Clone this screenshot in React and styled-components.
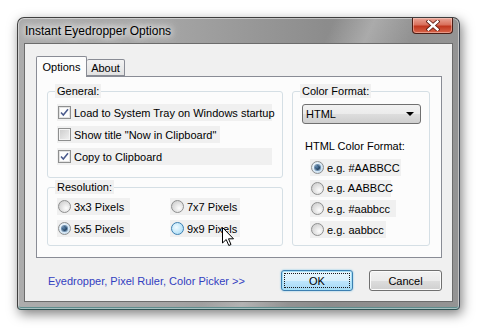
import React from "react";
import styled, { createGlobalStyle } from "styled-components";

const Global = createGlobalStyle`
  html, body {
    margin: 0;
    background: #fff;
  }
  body {
    font-family: "Liberation Sans", Arial, sans-serif;
    font-size: 11px;
    color: #000;
  }
`;

function Checkbox({ checked }) {
  return (
    <Box checked={checked}>
      {checked && (
        <svg width="11" height="11" viewBox="0 0 11 11">
          <path d="M2 5.5 L4.3 8 L9 2.2" fill="none" stroke="#4a5a8c" strokeWidth="1.5" />
        </svg>
      )}
    </Box>
  );
}

function CloseGlyph() {
  return (
    <svg width="14" height="11" viewBox="0 0 14 11">
      <path d="M2.5 1.5 L11.5 9.5 M11.5 1.5 L2.5 9.5" stroke="#5a1a10" strokeWidth="4" strokeLinecap="square" />
      <path d="M2.5 1.5 L11.5 9.5 M11.5 1.5 L2.5 9.5" stroke="#fff" strokeWidth="2.4" strokeLinecap="square" />
    </svg>
  );
}

function Cursor() {
  return (
    <Pointer width="13" height="20" viewBox="0 0 13 20">
      <path d="M0.5 0.5 L0.5 16 L4.2 12.5 L6.8 18.5 L9 17.5 L6.5 11.8 L11.5 11.8 Z" fill="#fff" stroke="#000" strokeWidth="1" />
    </Pointer>
  );
}

export default function App() {
  return (
    <>
      <Global />
      <Page>
        <Window>
          <TitleBar>
            <Title>Instant Eyedropper Options</Title>
            <CloseButton>
              <CloseGlyph />
            </CloseButton>
          </TitleBar>
          <Client>
            <TabRow>
              <Tab selected width={51}>Options</Tab>
              <Tab width={38}>About</Tab>
            </TabRow>
            <Panel>
              <LeftColumn>
                <Group height={94}>
                  <Legend>General:</Legend>
                  <Stack gap={5}>
                    <Option width={215}>
                      <Checkbox checked />
                      <span>Load to System Tray on Windows startup</span>
                    </Option>
                    <Option width={163}>
                      <Checkbox />
                      <span>Show title "Now in Clipboard"</span>
                    </Option>
                    <Option width={215}>
                      <Checkbox checked />
                      <span>Copy to Clipboard</span>
                    </Option>
                  </Stack>
                </Group>
                <Group height={66}>
                  <Legend>Resolution:</Legend>
                  <ResolutionGrid>
                    <Option width={73}>
                      <Radio />
                      <span>3x3 Pixels</span>
                    </Option>
                    <Option width={70}>
                      <Radio />
                      <span>7x7 Pixels</span>
                    </Option>
                    <Option width={73}>
                      <Radio checked />
                      <span>5x5 Pixels</span>
                    </Option>
                    <Option width={70}>
                      <Radio hover />
                      <span>9x9 Pixels</span>
                      <Cursor />
                    </Option>
                  </ResolutionGrid>
                </Group>
              </LeftColumn>
              <Group height={162}>
                <Legend>Color Format:</Legend>
                <Select>
                  <span>HTML</span>
                  <Arrow />
                </Select>
                <SubLabel>HTML Color Format:</SubLabel>
                <Stack gap={3.7} indent={8}>
                  <Option width={91}>
                    <Radio checked />
                    <span>e.g. #AABBCC</span>
                  </Option>
                  <Option width={81}>
                    <Radio />
                    <span>e.g. AABBCC</span>
                  </Option>
                  <Option width={86}>
                    <Radio />
                    <span>e.g. #aabbcc</span>
                  </Option>
                  <Option width={76}>
                    <Radio />
                    <span>e.g. aabbcc</span>
                  </Option>
                </Stack>
              </Group>
            </Panel>
            <Footer>
              <Link>Eyedropper, Pixel Ruler, Color Picker &gt;&gt;</Link>
              <Buttons>
                <Button primary width={72}>
                  <Focus>OK</Focus>
                </Button>
                <Button width={73}>Cancel</Button>
              </Buttons>
            </Footer>
          </Client>
        </Window>
      </Page>
    </>
  );
}

const Page = styled.div`
  width: 480px;
  height: 330px;
  box-sizing: border-box;
  padding: 17px 0 0 17px;
  overflow: hidden;
`;

const Window = styled.div`
  width: 443px;
  height: 293px;
  box-sizing: border-box;
  display: flex;
  flex-direction: column;
  padding: 0 6px 7px 6px;
  border: 1px solid #3e3e3e;
  border-right-color: #3c4450;
  border-bottom-color: #2e5252;
  border-radius: 7px 7px 4px 4px;
  background:
    linear-gradient(115deg, transparent 55%, rgba(255, 255, 255, 0.25) 62%, transparent 70%),
    linear-gradient(to right, #acacac 0%, #a4a4a4 35%, #8c8c8c 70%, #949494 100%);
  box-shadow:
    inset 0 0 0 1px rgba(255, 255, 255, 0.45),
    inset 0 -2px 0 #5f8e8e,
    2px 4px 12px rgba(0, 0, 0, 0.5);
`;

const TitleBar = styled.div`
  height: 25px;
  display: flex;
  justify-content: space-between;
  align-items: flex-start;
`;

const Title = styled.div`
  font-family: "Liberation Sans", Arial, sans-serif;
  font-size: 12px;
  line-height: 27px;
  padding-left: 1px;
  color: #000;
  text-shadow: 0 0 6px #fff, 0 0 10px #fff, 0 0 14px #eee;
`;

const CloseButton = styled.div`
  width: 41px;
  height: 16px;
  box-sizing: border-box;
  border: 1px solid #4a1c14;
  border-top: none;
  border-radius: 0 0 4px 4px;
  background: linear-gradient(#e9a597 0%, #d9705c 45%, #c0371f 55%, #d8654a 100%);
  box-shadow: inset 0 0 0 1px rgba(255, 220, 210, 0.45);
  display: flex;
  align-items: center;
  justify-content: center;
`;

const Client = styled.div`
  flex: 1;
  display: flex;
  flex-direction: column;
  box-sizing: border-box;
  background: #f0f0f0;
  border: 1px solid #6c6c6c;
  padding: 12px 10px 0 11px;
`;

const TabRow = styled.div`
  display: flex;
  align-items: flex-end;
  height: 20px;
`;

const Tab = styled.div`
  width: ${(p) => p.width}px;
  height: ${(p) => (p.selected ? 21 : 17)}px;
  margin-bottom: ${(p) => (p.selected ? -1 : 0)}px;
  box-sizing: border-box;
  border: 1px solid #898c95;
  border-bottom: ${(p) => (p.selected ? "none" : "1px solid #898c95")};
  border-left: ${(p) => (p.selected ? "1px solid #898c95" : "none")};
  border-radius: 2px 2px 0 0;
  background: ${(p) => (p.selected ? "#fcfcfc" : "linear-gradient(#f3f3f3, #e2e2e2)")};
  position: relative;
  z-index: ${(p) => (p.selected ? 1 : 0)};
  display: flex;
  align-items: center;
  justify-content: center;
  padding-top: ${(p) => (p.selected ? 0 : 1)}px;
`;

const Panel = styled.div`
  height: 182px;
  box-sizing: border-box;
  border: 1px solid #898c95;
  background: #fcfcfc;
  padding: 7px 0 0 10px;
  display: grid;
  grid-template-columns: 236px 138px;
  column-gap: 9px;
  align-items: start;
`;

const LeftColumn = styled.div`
  display: flex;
  flex-direction: column;
  gap: 2px;
`;

const Group = styled.fieldset`
  margin: 0;
  height: ${(p) => p.height}px;
  box-sizing: border-box;
  border: 1px solid #d5dfe5;
  border-radius: 3px;
  padding: 0 8px 0 9px;
  min-width: 0;
`;

const Legend = styled.legend`
  padding: 0 2px;
  margin-left: -2px;
  line-height: 14px;
  background: #f0f0f0;
`;

const Stack = styled.div`
  display: flex;
  flex-direction: column;
  align-items: flex-start;
  gap: ${(p) => p.gap}px;
  padding-top: 6px;
  padding-left: ${(p) => p.indent || 0}px;
`;

const ResolutionGrid = styled.div`
  display: grid;
  grid-template-columns: 113px 70px;
  row-gap: 5px;
  padding-top: 4px;
`;

const Option = styled.div`
  position: relative;
  width: ${(p) => p.width}px;
  height: 17px;
  display: flex;
  align-items: center;
  gap: 3px;
  padding-left: 1px;
  box-sizing: border-box;
  background: #f0f0f0;
  white-space: nowrap;
`;

const Box = styled.span`
  width: 13px;
  height: 13px;
  box-sizing: border-box;
  flex-shrink: 0;
  border: 1px solid #8e8f8f;
  display: flex;
  align-items: center;
  justify-content: center;
  background: ${(p) =>
    p.checked ? "#fdfdfd" : "linear-gradient(135deg, #cbcbcb, #f2f2f2)"};
  box-shadow: ${(p) => (p.checked ? "inset 0 0 0 1px #e3e3e3" : "inset 0 0 0 1px #f4f4f4")};
`;

const Radio = styled.span`
  width: 13px;
  height: 13px;
  box-sizing: border-box;
  flex-shrink: 0;
  border-radius: 50%;
  border: 1px solid ${(p) => (p.hover ? "#3c7fb1" : "#8e8f8f")};
  display: flex;
  align-items: center;
  justify-content: center;
  background: ${(p) =>
    p.hover
      ? "radial-gradient(circle at 40% 40%, #f0faff, #b6e2f8 70%)"
      : p.checked
      ? "radial-gradient(circle at 40% 40%, #ffffff, #c9dff0 75%)"
      : "radial-gradient(circle at 65% 65%, #fdfdfd, #d0d0d0 80%)"};
  &::after {
    content: "";
    display: ${(p) => (p.checked ? "block" : "none")};
    width: 5px;
    height: 5px;
    border-radius: 50%;
    background: radial-gradient(circle at 35% 35%, #5e88b0, #12304e 80%);
    box-shadow: 0 0 0 1px #6c8fb0;
  }
`;

const Pointer = styled.svg`
  position: absolute;
  left: 52px;
  top: 7px;
`;

const Select = styled.div`
  width: 119px;
  height: 20px;
  margin-top: 6px;
  box-sizing: border-box;
  border: 1px solid #707070;
  border-radius: 3px;
  background: linear-gradient(#f2f2f2 0%, #ebebeb 50%, #dddddd 51%, #cfcfcf 100%);
  display: flex;
  align-items: center;
  justify-content: space-between;
  padding: 0 6px 0 3px;
`;

const Arrow = styled.span`
  width: 0;
  height: 0;
  border-left: 4px solid transparent;
  border-right: 4px solid transparent;
  border-top: 4px solid #000;
`;

const SubLabel = styled.div`
  margin-top: 15px;
  padding-left: 3px;
  line-height: 14px;
`;

const Footer = styled.div`
  margin-top: 12px;
  height: 21px;
  display: flex;
  align-items: center;
  padding-left: 12px;
`;

const Link = styled.span`
  color: #3340c0;
`;

const Buttons = styled.div`
  margin-left: auto;
  display: flex;
  gap: 16px;
`;

const Button = styled.div`
  width: ${(p) => p.width}px;
  height: 21px;
  box-sizing: border-box;
  border: 1px solid ${(p) => (p.primary ? "#3c7fb1" : "#707070")};
  border-radius: 3px;
  background: ${(p) =>
    p.primary
      ? "linear-gradient(#eaf6fd 0%, #d9f0fc 50%, #bee6fd 51%, #a7d9f5 100%)"
      : "linear-gradient(#f2f2f2 0%, #ebebeb 50%, #dddddd 51%, #cfcfcf 100%)"};
  box-shadow: ${(p) =>
    p.primary ? "inset 0 0 0 1px #a6e0f6, 0 0 2px #72c0e8" : "inset 0 0 0 1px #fbfbfb"};
  display: flex;
  align-items: center;
  justify-content: center;
  padding: 2px;
`;

const Focus = styled.span`
  flex: 1;
  align-self: stretch;
  display: flex;
  align-items: center;
  justify-content: center;
  border: 1px dotted #1a1a1a;
`;
